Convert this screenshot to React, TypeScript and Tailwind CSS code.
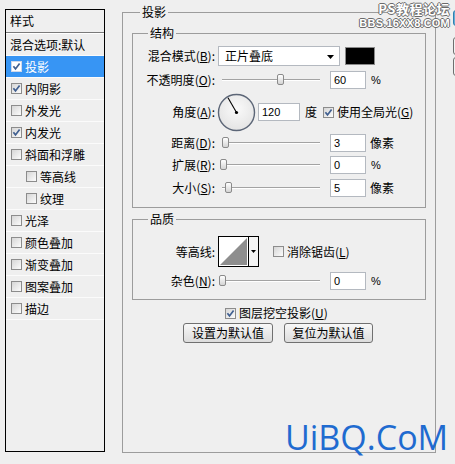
import React from "react";

function Check({ checked, sel }: { checked?: boolean; sel?: boolean }) {
  return (
    <span
      className={
        "inline-flex w-[11px] h-[11px] shrink-0 items-center justify-center border " +
        (sel ? "border-[#d0d8e8] bg-white" : "border-[#8c8c8c] bg-linear-to-br from-[#d6d6d6] to-[#fcfcfc]")
      }
    >
      {checked && (
        <svg width="9" height="9" viewBox="0 0 9 9">
          <path d="M1.4 4.3 L3.5 6.9 L7.6 1.6" fill="none" stroke="#405f90" strokeWidth="1.7" />
        </svg>
      )}
    </span>
  );
}

function Slider({ thumb }: { thumb: string }) {
  return (
    <div className="relative w-[104px] h-[18px] shrink-0">
      <div className="absolute left-[4px] top-[8px] w-[98px] h-[1px] bg-[#a3a3a3]" />
      <div className="absolute left-[4px] top-[9px] w-[98px] h-[1px] bg-white" />
      <div
        className={
          "absolute top-[3px] w-[7px] h-[11px] rounded-[2px] border border-[#8a8a8a] bg-linear-to-b from-white to-[#d4d4d4] " +
          thumb
        }
      />
    </div>
  );
}

function Field({ value, w }: { value: string; w: string }) {
  return (
    <div
      className={
        "h-[18px] shrink-0 border border-[#b4b9c0] bg-white flex items-center pl-[3px] text-[11px] font-['Liberation_Sans',sans-serif] " +
        w
      }
    >
      {value}
    </div>
  );
}

function Label({ text, k, after }: { text: string; k: string; after?: string }) {
  return (
    <div className="w-[82px] shrink-0 text-right text-[12px] leading-[14px] whitespace-nowrap">
      {text}(<span className="underline">{k}</span>){after ?? ":"}
    </div>
  );
}

const items: { t: string; cb: boolean | null; sel?: boolean; indent?: boolean }[] = [
  { t: "混合选项:默认", cb: null },
  { t: "投影", cb: true, sel: true },
  { t: "内阴影", cb: true },
  { t: "外发光", cb: false },
  { t: "内发光", cb: true },
  { t: "斜面和浮雕", cb: false },
  { t: "等高线", cb: false, indent: true },
  { t: "纹理", cb: false, indent: true },
  { t: "光泽", cb: false },
  { t: "颜色叠加", cb: false },
  { t: "渐变叠加", cb: false },
  { t: "图案叠加", cb: false },
  { t: "描边", cb: false },
];

export default function App() {
  return (
    <div className="relative w-[455px] h-[464px] overflow-hidden bg-[#efefef] flex items-start text-black font-['Noto_Sans_CJK_SC','Noto_Sans',sans-serif]">
      {/* Left style list */}
      <div className="ml-[5px] mt-[9px] w-[100px] h-[443px] shrink-0 border border-black flex flex-col">
        <div className="h-[23px] border-b border-[#7a7a7a] flex items-center pl-[4px] text-[12px]">样式</div>
        <div className="h-[1px] bg-white" />
        {items.map((it) => (
          <div
            key={it.t}
            className={
              "h-[22px] flex items-center border-b border-[#fbfbfb] text-[12px] whitespace-nowrap " +
              (it.sel ? "bg-[#3795f4] text-white " : "") +
              (it.cb === null ? "pl-[4px]" : it.indent ? "pl-[20px]" : "pl-[5px]")
            }
          >
            {it.cb !== null && <Check checked={it.cb} sel={it.sel} />}
            <span className={it.cb !== null ? "ml-[3px]" : ""}>{it.t}</span>
          </div>
        ))}
      </div>

      {/* Right: 投影 group */}
      <div className="relative ml-[17px] mt-[12px] w-[314px] h-[441px] shrink-0 border border-[#9c9c9c] pl-[9px] pt-[20px]">
        <span className="absolute -top-[9px] left-[17px] px-[2px] bg-[#efefef] text-[12px] leading-[16px]">投影</span>

        {/* 结构 */}
        <div className="relative w-[294px] h-[175px] border border-[#9c9c9c] flex flex-col">
          <span className="absolute -top-[9px] left-[15px] px-[2px] bg-[#efefef] text-[12px] leading-[16px]">结构</span>

          <div className="mt-[12px] h-[20px] flex items-center">
            <Label text="混合模式" k="B" />
            <div className="ml-[3px] w-[122px] h-[20px] border border-[#b4b9c0] bg-white flex items-center pl-[6px] text-[12px] relative">
              正片叠底
              <svg className="absolute right-[5px] top-[8px]" width="7" height="4" viewBox="0 0 7 4">
                <path d="M0 0 H7 L3.5 4 Z" fill="black" />
              </svg>
            </div>
            <div className="ml-[5px] w-[30px] h-[18px] bg-black border border-[#8a8a8a]" />
          </div>

          <div className="mt-[5px] h-[18px] flex items-center">
            <Label text="不透明度" k="O" />
            <div className="ml-[3px]">
              <Slider thumb="left-[59px]" />
            </div>
            <div className="ml-[8px]">
              <Field value="60" w="w-[36px]" />
            </div>
            <span className="ml-[5px] text-[11px] font-['Liberation_Sans',sans-serif]">%</span>
          </div>

          <div className="mt-[4px] h-[38px] flex items-center">
            <Label text="角度" k="A" />
            <svg className="ml-[2px] shrink-0" width="39" height="39" viewBox="0 0 39 39">
              <defs>
                <radialGradient id="dial" cx="0.5" cy="0.4" r="0.6">
                  <stop offset="0" stopColor="#fafafa" />
                  <stop offset="1" stopColor="#e4e4e4" />
                </radialGradient>
              </defs>
              <circle cx="19.5" cy="19.5" r="18" fill="url(#dial)" stroke="#5c6677" strokeWidth="1.4" />
              <line x1="19.5" y1="19.5" x2="11" y2="4.8" stroke="black" strokeWidth="1.1" />
              <circle cx="19.5" cy="19.5" r="1.6" fill="black" />
            </svg>
            <div className="ml-[2px]">
              <Field value="120" w="w-[42px]" />
            </div>
            <span className="ml-[5px] text-[12px]">度</span>
            <span className="ml-[6px] flex items-center">
              <Check checked />
            </span>
            <span className="ml-[3px] text-[12px] whitespace-nowrap">
              使用全局光(<span className="underline">G</span>)
            </span>
          </div>

          <div className="mt-[3px] h-[18px] flex items-center">
            <Label text="距离" k="D" />
            <div className="ml-[3px]">
              <Slider thumb="left-[4px]" />
            </div>
            <div className="ml-[8px]">
              <Field value="3" w="w-[36px]" />
            </div>
            <span className="ml-[4px] text-[12px]">像素</span>
          </div>

          <div className="mt-[4px] h-[18px] flex items-center">
            <Label text="扩展" k="R" />
            <div className="ml-[3px]">
              <Slider thumb="left-[2px]" />
            </div>
            <div className="ml-[8px]">
              <Field value="0" w="w-[36px]" />
            </div>
            <span className="ml-[5px] text-[11px] font-['Liberation_Sans',sans-serif]">%</span>
          </div>

          <div className="mt-[5px] h-[18px] flex items-center">
            <Label text="大小" k="S" />
            <div className="ml-[3px]">
              <Slider thumb="left-[7px]" />
            </div>
            <div className="ml-[8px]">
              <Field value="5" w="w-[36px]" />
            </div>
            <span className="ml-[4px] text-[12px]">像素</span>
          </div>
        </div>

        {/* 品质 */}
        <div className="relative mt-[11px] w-[294px] h-[81px] border border-[#9c9c9c] flex flex-col">
          <span className="absolute -top-[9px] left-[15px] px-[2px] bg-[#efefef] text-[12px] leading-[16px]">品质</span>

          <div className="mt-[16px] h-[31px] flex items-center">
            <div className="w-[82px] shrink-0 text-right text-[12px]">等高线:</div>
            <div className="ml-[3px] flex w-[41px] h-[31px] border border-black bg-white shrink-0">
              <svg width="29" height="29" viewBox="0 0 29 29">
                <polygon points="1,28 28,1 28,28" fill="#8e8e8e" />
              </svg>
              <div className="w-[10px] border-l border-black bg-[#f4f4f4] flex items-center justify-center">
                <svg width="5" height="3" viewBox="0 0 5 3">
                  <path d="M0 0 H5 L2.5 3 Z" fill="black" />
                </svg>
              </div>
            </div>
            <span className="ml-[14px] flex items-center">
              <Check />
            </span>
            <span className="ml-[3px] text-[12px] whitespace-nowrap">
              消除锯齿(<span className="underline">L</span>)
            </span>
          </div>

          <div className="mt-[5px] h-[18px] flex items-center">
            <Label text="杂色" k="N" />
            <div className="ml-[3px]">
              <Slider thumb="left-[1px]" />
            </div>
            <div className="ml-[8px]">
              <Field value="0" w="w-[36px]" />
            </div>
            <span className="ml-[5px] text-[11px] font-['Liberation_Sans',sans-serif]">%</span>
          </div>
        </div>

        <div className="mt-[6px] h-[14px] flex items-center pl-[93px]">
          <Check checked />
          <span className="ml-[3px] text-[12px] whitespace-nowrap">
            图层挖空投影(<span className="underline">U</span>)
          </span>
        </div>

        <div className="mt-[3px] flex pl-[51px] gap-[11px]">
          <button className="w-[90px] h-[20px] rounded-[3px] border border-[#707070] bg-linear-to-b from-[#f8f8f8] to-[#dcdcdc] text-[12px] leading-[18px]">
            设置为默认值
          </button>
          <button className="w-[89px] h-[20px] rounded-[3px] border border-[#707070] bg-linear-to-b from-[#f8f8f8] to-[#dcdcdc] text-[12px] leading-[18px]">
            复位为默认值
          </button>
        </div>
      </div>

      {/* Cut-off dialog buttons on the right edge */}
      <div className="ml-[17px] w-[70px] shrink-0 flex flex-col">
        <div className="mt-[10px] h-[16px] rounded-[3px] border border-[#2f7fb0] bg-[#67aed6]" />
        <div className="mt-[11px] h-[18px] rounded-[3px] border border-[#6f6f6f] bg-[#f2f2f2]" />
        <div className="mt-[2px] h-[19px] rounded-[3px] border border-[#6f6f6f] bg-[#f2f2f2]" />
      </div>

      {/* Watermark */}
      <div className="absolute top-[2px] left-[362px] w-[88px] flex flex-col items-end text-white">
        <div className="text-[13px] font-bold leading-[14px] tracking-[0.5px] [text-shadow:1px_0_#6a6a6a,-1px_0_#6a6a6a,0_1px_#6a6a6a,0_-1px_#6a6a6a]">
          PS教程论坛
        </div>
        <div className="mt-[1px] whitespace-nowrap text-[11px] font-bold leading-[12px] tracking-[0.2px] font-['Liberation_Sans',sans-serif] [text-shadow:1px_0_#6a6a6a,-1px_0_#6a6a6a,0_1px_#6a6a6a,0_-1px_#6a6a6a]">
          BBS.16XX8.COM
        </div>
      </div>

      {/* Site logo */}
      <div className="absolute left-[285px] top-[420px] text-[34px] leading-none text-[#1f6bd0] font-['Open_Sans',sans-serif]">
        UiBQ.CoM
      </div>
    </div>
  );
}
